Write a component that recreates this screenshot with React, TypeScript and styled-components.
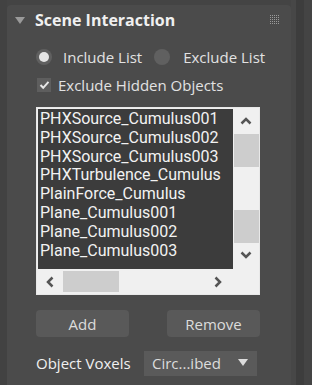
import React from "react";
import styled, { createGlobalStyle } from "styled-components";

const GlobalStyle = createGlobalStyle`
  html, body {
    margin: 0;
    padding: 0;
    background: #444444;
    font-family: "Open Sans", "Noto Sans", sans-serif;
  }
`;

const Page = styled.div`
  display: flex;
  width: 312px;
  height: 385px;
  overflow: hidden;
  background: #444444;
`;

const LeftGutter = styled.div`
  width: 7px;
  background: #424242;
`;

const Panel = styled.div`
  margin-top: 5px;
  width: 284px;
  flex-shrink: 0;
  background: #4b4b4b;
  border-radius: 4px 4px 0 0;
  display: flex;
  flex-direction: column;
`;

const RightEdge = styled.div`
  display: flex;
  flex: 1;
`;

const Strip = styled.div<{ $w: number; $bg: string }>`
  width: ${({ $w }) => $w}px;
  background: ${({ $bg }) => $bg};
`;

const Header = styled.div`
  height: 30px;
  display: flex;
  align-items: center;
  padding: 0 11px 0 8px;
`;

const Caret = styled.div`
  width: 0;
  height: 0;
  border-left: 5px solid transparent;
  border-right: 5px solid transparent;
  border-top: 7px solid #9a9a9a;
  margin-right: 10px;
`;

const Title = styled.span`
  flex: 1;
  font-size: 16px;
  font-weight: 700;
  color: #f0f0f0;
`;

const Body = styled.div`
  padding: 0 0 0 29px;
  display: flex;
  flex-direction: column;
  color: #e2e2e2;
  font-size: 15px;
  white-space: nowrap;
`;

const RadioRow = styled.div`
  display: flex;
  align-items: center;
  height: 24px;
  margin-top: 10px;
`;

const RadioItem = styled.label`
  display: flex;
  align-items: center;
  margin-right: 12px;
`;

const RadioDot = styled.span<{ $on?: boolean }>`
  width: 16px;
  height: 16px;
  border-radius: 50%;
  background: #606060;
  display: flex;
  align-items: center;
  justify-content: center;
  margin-right: ${({ $on }) => ($on ? 11 : 13)}px;
  &::after {
    content: "";
    width: 10px;
    height: 10px;
    border-radius: 50%;
    background: ${({ $on }) => ($on ? "#e6e6e6" : "transparent")};
  }
`;

const CheckRow = styled.label`
  display: flex;
  align-items: center;
  height: 22px;
  margin-top: 5px;
`;

const CheckBox = styled.span`
  width: 14px;
  height: 14px;
  background: #5e5e5e;
  margin: 0 7px 0 1px;
  display: flex;
  align-items: center;
  justify-content: center;
`;

const ListBox = styled.div`
  margin-top: 11px;
  width: 222px;
  height: 186px;
  border: 1px solid #e8e8e8;
  background: #f0f0f0;
  display: grid;
  grid-template-columns: 1fr 26px;
  grid-template-rows: 1fr 25px;
`;

const Items = styled.div`
  background: #3c3c3c;
  margin: 1px 0 0 1px;
  padding: 1px 0 0 2px;
  overflow: hidden;
  font-family: Roboto, "Open Sans", sans-serif;
  font-size: 16px;
  line-height: 18.8px;
  color: #f2f2f2;
`;

const VScroll = styled.div`
  display: flex;
  flex-direction: column;
  align-items: stretch;
`;

const ArrowCell = styled.div<{ $h?: number; $w?: number }>`
  height: ${({ $h }) => ($h ? `${$h}px` : "auto")};
  width: ${({ $w }) => ($w ? `${$w}px` : "auto")};
  display: flex;
  align-items: center;
  justify-content: center;
`;

const Thumb = styled.div<{ $h: number }>`
  height: ${({ $h }) => $h}px;
  background: #cdcdcd;
  margin: 0 0 0 1px;
`;

const Track = styled.div<{ $h: number }>`
  height: ${({ $h }) => $h}px;
`;

const HScroll = styled.div`
  display: flex;
  align-items: stretch;
`;

const HThumb = styled.div`
  width: 56px;
  margin: 2px 0;
  background: #cdcdcd;
`;

const HTrack = styled.div`
  flex: 1;
`;

const ButtonRow = styled.div`
  display: flex;
  justify-content: space-between;
  margin-top: 15px;
  width: 224px;
`;

const Button = styled.button`
  width: 93px;
  height: 27px;
  border: none;
  border-radius: 4px;
  background: #595959;
  color: #dcdcdc;
  font-family: "Open Sans", "Noto Sans", sans-serif;
  font-size: 15px;
  padding: 0;
`;

const VoxelRow = styled.div`
  display: flex;
  align-items: center;
  margin-top: 13px;
  height: 26px;
`;

const VoxelLabel = styled.span`
  width: 108px;
  color: #f0f0f0;
`;

const Select = styled.div`
  width: 113px;
  height: 25px;
  background: #5a5a5a;
  display: flex;
  align-items: center;
  justify-content: space-between;
  padding: 0 9px 0 8px;
  box-sizing: border-box;
  color: #dcdcdc;
`;

const Grip = () => (
  <svg width="10" height="10" viewBox="0 0 10 10">
    {[0, 1, 2, 3, 4].map((r) =>
      [0, 1, 2, 3, 4].map((c) => (
        <rect key={`${r}-${c}`} x={c * 2} y={r * 2} width="1" height="1" fill="#9a9a9a" />
      ))
    )}
  </svg>
);

const Chevron = ({ dir }: { dir: "up" | "down" | "left" | "right" }) => {
  const rot = { up: 0, right: 90, down: 180, left: 270 }[dir];
  return (
    <svg width="12" height="12" viewBox="0 0 12 12" style={{ transform: `rotate(${rot}deg)` }}>
      <path d="M1.5 8.5 L6 4 L10.5 8.5" fill="none" stroke="#555555" strokeWidth="2.5" />
    </svg>
  );
};

const objects = [
  "PHXSource_Cumulus001",
  "PHXSource_Cumulus002",
  "PHXSource_Cumulus003",
  "PHXTurbulence_Cumulus",
  "PlainForce_Cumulus",
  "Plane_Cumulus001",
  "Plane_Cumulus002",
  "Plane_Cumulus003",
];

const App: React.FC = () => {
  return (
    <Page>
      <GlobalStyle />
      <LeftGutter />
      <Panel>
        <Header>
          <Caret />
          <Title>Scene Interaction</Title>
          <Grip />
        </Header>
        <Body>
          <RadioRow>
            <RadioItem>
              <RadioDot $on />
              Include List
            </RadioItem>
            <RadioItem>
              <RadioDot />
              Exclude List
            </RadioItem>
          </RadioRow>
          <CheckRow>
            <CheckBox>
              <svg width="11" height="10" viewBox="0 0 11 10">
                <path d="M1.5 5 L4.2 7.8 L9.5 1.8" fill="none" stroke="#e8e8e8" strokeWidth="2" />
              </svg>
            </CheckBox>
            Exclude Hidden Objects
          </CheckRow>
          <ListBox>
            <Items>
              {objects.map((o) => (
                <div key={o}>{o}</div>
              ))}
            </Items>
            <VScroll>
              <ArrowCell $h={26}>
                <Chevron dir="up" />
              </ArrowCell>
              <Thumb $h={33} />
              <Track $h={43} />
              <Thumb $h={33} />
              <ArrowCell $h={24}>
                <Chevron dir="down" />
              </ArrowCell>
            </VScroll>
            <HScroll>
              <ArrowCell $w={26}>
                <Chevron dir="left" />
              </ArrowCell>
              <HThumb />
              <HTrack />
              <ArrowCell $w={30}>
                <Chevron dir="right" />
              </ArrowCell>
            </HScroll>
            <div />
          </ListBox>
          <ButtonRow>
            <Button>Add</Button>
            <Button>Remove</Button>
          </ButtonRow>
          <VoxelRow>
            <VoxelLabel>Object Voxels</VoxelLabel>
            <Select>
              <span>Circ...ibed</span>
              <svg width="10" height="8" viewBox="0 0 10 8">
                <path d="M0 0 H10 L5 7 Z" fill="#dcdcdc" />
              </svg>
            </Select>
          </VoxelRow>
        </Body>
      </Panel>
      <RightEdge>
        <Strip $w={5} $bg="#474747" />
        <Strip $w={8} $bg="#3d3d3d" />
        <Strip $w={8} $bg="#444444" />
      </RightEdge>
    </Page>
  );
};

export default App;
